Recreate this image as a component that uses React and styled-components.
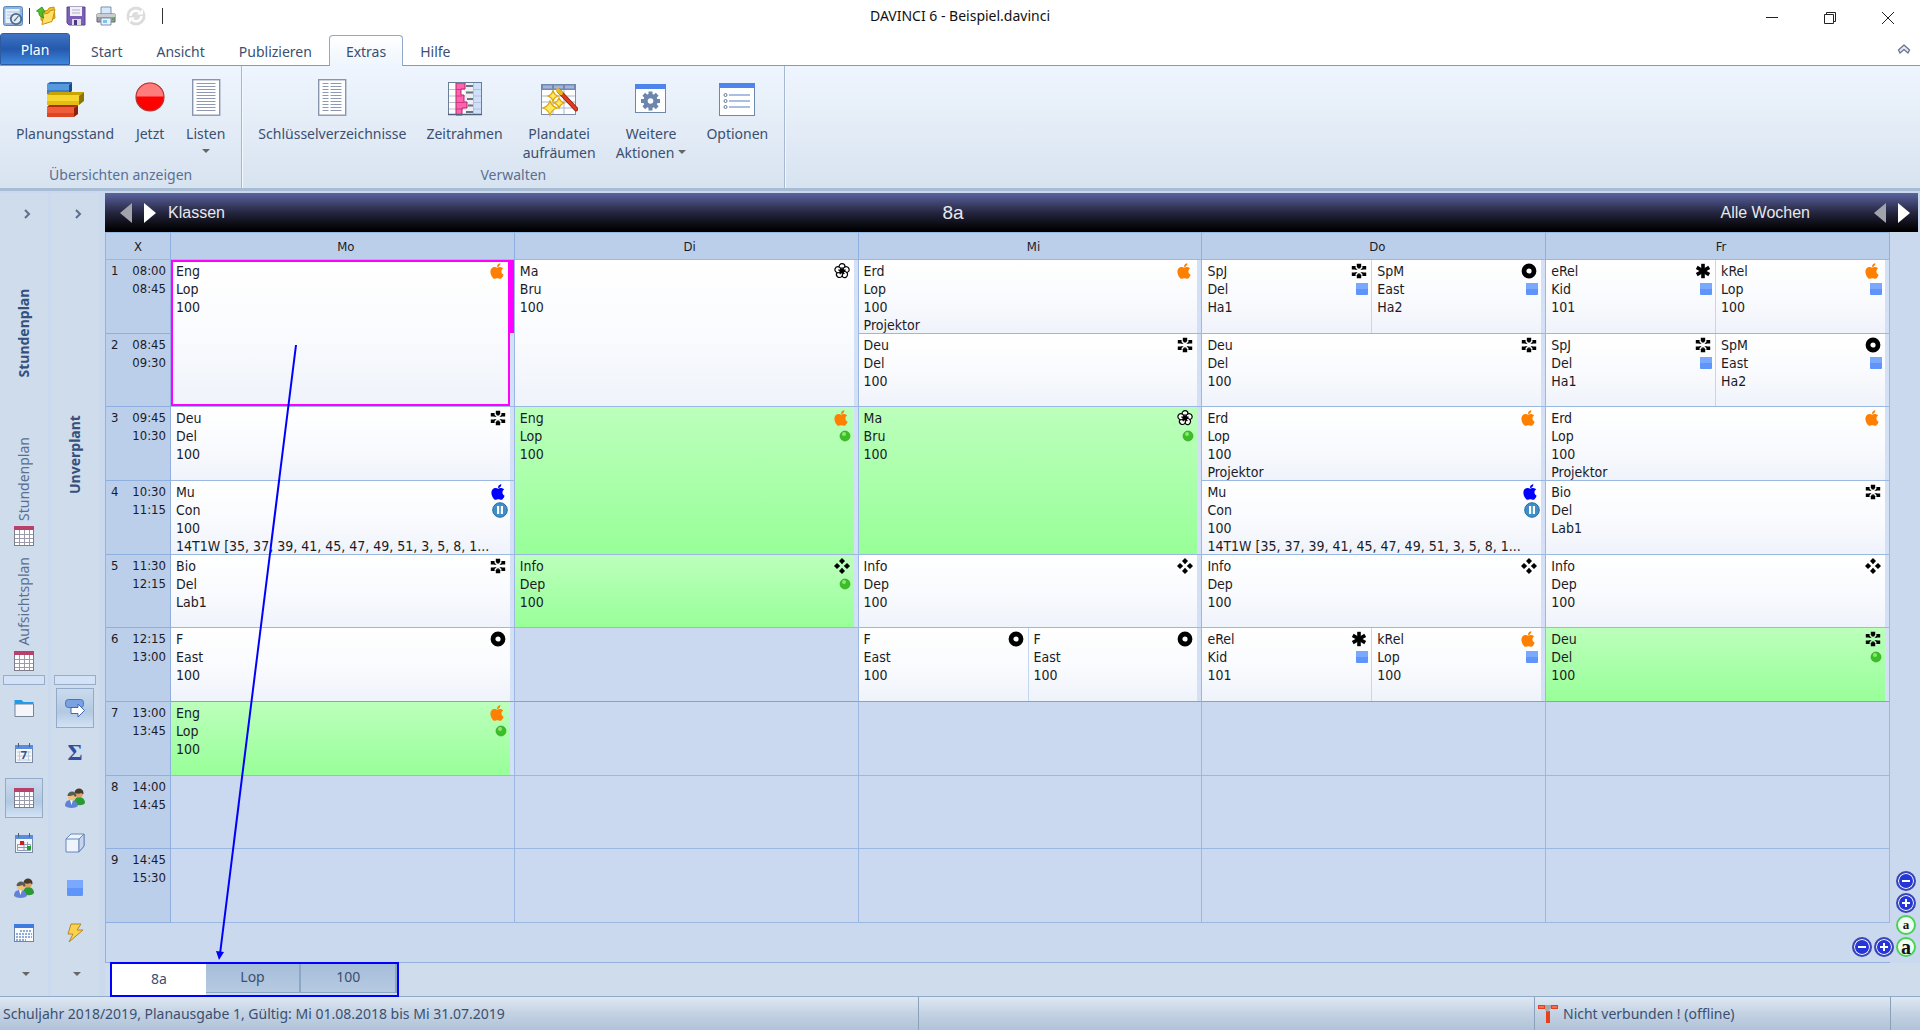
import React from 'react';
import styled, { createGlobalStyle, css } from 'styled-components';
import { FaApple } from 'react-icons/fa';

const GlobalStyle = createGlobalStyle`
  * {
    box-sizing: border-box;
  }

  body {
    margin: 0;
    font-family: 'Noto Sans', 'Open Sans', sans-serif;
    font-size: 14px;
    color: #3b4f70;
    background: #fff;
  }

  button {
    font: inherit;
    color: inherit;
    padding: 0;
    border: 0;
    background: none;
  }

  svg {
    display: block;
    flex: none;
  }
`;

const tahoma = css`
  font-family: 'DejaVu Sans Condensed', 'DejaVu Sans', sans-serif;
  font-size: 13px;
  line-height: 18px;
  color: #1b1b26;
`;

/* ---------- icons ---------- */

const Icon = ({ size = 20, box = 20, children }) => (
  <svg width={size} height={size} viewBox={`0 0 ${box} ${box}`} aria-hidden="true">
    {children}
  </svg>
);

const AppIcon = () => (
  <Icon>
    <rect x="0.5" y="0.5" width="19" height="19" rx="2" fill="#8fb4e0" stroke="#5b87bd" />
    <rect x="2.5" y="3" width="14" height="14" fill="#e9f1fa" />
    <path d="M4 6h12M4 9h5M4 12h4" stroke="#a9c3e2" />
    <circle cx="13" cy="13" r="5.2" fill="#e4ecf4" stroke="#51698a" strokeWidth="1.8" />
    <path d="M13 13l2.4-3M13 13l-2 2" stroke="#51698a" strokeWidth="1.2" />
  </Icon>
);

const OpenIcon = () => (
  <Icon>
    <path d="M5 6l7-2 1-2 5-1 1 11-9 5-5-3z" fill="#f0c22a" stroke="#c8930c" />
    <path d="M6 18.500L7.500 8l5-1 1-2 5.500-1.500-3 12z" fill="#ffe06a" stroke="#c8930c" />
    <path d="M0.500 5L6 1l3 5-2.500.5C6 9 7 11 8 12 4 11 2.500 9 3 6z" fill="#4fc02a" stroke="#2a8a12" strokeWidth="0.800" />
  </Icon>
);

const SaveIcon = () => (
  <Icon>
    <path d="M1 1h18v18H3l-2-2z" fill="#7a5fb5" stroke="#5d4496" />
    <path d="M4 1h12v9H4z" fill="#f2f2f6" />
    <path d="M6 4h8M6 7h8" stroke="#b3aeca" />
    <path d="M6 13h9v6H6z" fill="#dcdce6" />
    <path d="M8 14h3v5H8z" fill="#4b3880" />
  </Icon>
);

const PrintIcon = () => (
  <Icon>
    <path d="M5 1h10v8H5z" fill="#d6e8fb" stroke="#7f93ab" />
    <path d="M1 8h18v8H1z" fill="#9a9ea4" stroke="#62676e" />
    <path d="M1 8h18v3H1z" fill="#c9ccd0" />
    <path d="M5 12h10v7H5z" fill="#e9f4ff" stroke="#7f93ab" />
    <path d="M7 14h4v3H7z" fill="#7fc0f0" />
    <path d="M16 12h2v2h-2z" fill="#45b53a" />
  </Icon>
);

const RefreshIcon = () => (
  <Icon>
    <circle cx="10" cy="10" r="9.5" fill="#dcdcdc" />
    <path d="M4.500 10a5.500 5.500 0 019-4" fill="none" stroke="#fff" strokeWidth="2.400" />
    <path d="M15.500 10a5.500 5.500 0 01-9 4" fill="none" stroke="#fff" strokeWidth="2.400" />
    <path d="M11 8.500h6V3zM9 11.500H3V17z" fill="#fff" />
  </Icon>
);

const BricksIcon = () => (
  <Icon size={38} box={38}>
    <path d="M1 5l3-2h22l-3 3H1z" fill="#2f6ab0" />
    <path d="M23 6l3-3v9l-3 3z" fill="#1c4c88" />
    <path d="M1 5h22v10H1z" fill="#559ade" />
    <path d="M1 11h22v4H1z" fill="#3f7fc6" />
    <path d="M1 16l3-3h34l-5 4H1z" fill="#c9a400" />
    <path d="M33 17l5-4v9l-5 4z" fill="#8f7600" />
    <path d="M1 16h32v10H1z" fill="#f7d52c" />
    <path d="M1 22h32v4H1z" fill="#e3bd14" />
    <path d="M1 28l2-2h29l-4 3H1z" fill="#b02c0c" />
    <path d="M28 29l4-3v9l-4 3z" fill="#8c2008" />
    <path d="M1 28h27v10H1z" fill="#f05d38" />
    <path d="M1 34h27v4H1z" fill="#dc4622" />
  </Icon>
);

const NowIcon = () => (
  <svg width="32" height="38" viewBox="3 0 32 38" aria-hidden="true">
    <circle cx="19" cy="18" r="14" fill="#fe0000" />
    <path d="M5 17.500a14 14 0 0128 0z" fill="#ff7c7c" />
    <circle cx="19" cy="18" r="14" fill="none" stroke="#b03636" strokeWidth="1.200" />
  </svg>
);

const ListIcon = ({ columns }) => (
  <Icon size={38} box={38}>
    <rect x="5.700" y="0.700" width="27" height="35.500" fill="#fff" stroke="#8796ad" strokeWidth="1.400" />
    <path
      d="M9.500 4.500h19M9.500 7.500h19M9.500 10.500h19M9.500 13.500h19M9.500 16.500h19M9.500 19.500h19M9.500 22.500h19M9.500 25.500h19M9.500 28.500h19M9.500 31.500h19"
      stroke="#8f99b4"
    />
    {columns && <path d="M16.500 3v31" stroke="#fff" strokeWidth="2" />}
  </Icon>
);

const FrameIcon = () => (
  <Icon size={38} box={38}>
    <rect x="2.500" y="3.500" width="33" height="32" fill="#fff" />
    <path d="M27 4h8v32h-8z" fill="#cfe0fa" />
    <path d="M2.500 10.500h33M2.500 17h33M2.500 23.500h33M2.500 30h33M27.500 4v32" stroke="#b4c1d6" />
    <path d="M19 4h8v32h-8z" fill="#eceff4" />
    <path d="M20 7h7M20 13.500h7M21 20h6M22 26.500h5M20 33h7" stroke="#6b7280" strokeWidth="2" />
    <path d="M10 4h9v6h-4v6h3v7h3v6h-5v7h-6z" fill="#ff62ae" stroke="#b8256c" />
    <path d="M10 10.500h5M10 17h6M10 23.500h8M10 30h7" stroke="#c93a80" />
    <rect x="2.500" y="3.500" width="33" height="32" fill="none" stroke="#6b7c98" />
    <path d="M2 35.500h34" stroke="#4f607c" strokeWidth="1.500" />
  </Icon>
);

const sparkle = (x, y, r) =>
  `M${x} ${y - r}Q${x + r / 4} ${y - r / 4} ${x + r} ${y}Q${x + r / 4} ${y + r / 4} ${x} ${y + r}` +
  `Q${x - r / 4} ${y + r / 4} ${x - r} ${y}Q${x - r / 4} ${y - r / 4} ${x} ${y - r}z`;

const WandIcon = () => (
  <Icon size={38} box={38}>
    <rect x="1.500" y="5.500" width="34" height="30" fill="#fff" stroke="#7d8ea9" />
    <path d="M1 5h35v6H1z" fill="#7289b4" />
    <path d="M3 6.500h9v3H3zM14 6.500h9v3h-9zM25 6.500h9v3h-9z" fill="#a3b6d8" />
    <path d="M2 17h33M2 23h33M2 29h33M13 11v24M24 11v24" stroke="#a7b6cf" />
    {[[13, 17, 5], [19, 24, 5], [10, 29, 7]].map(([x, y, r]) => (
      <path key={y} d={sparkle(x, y, r)} fill="#ffe860" stroke="#dfa50a" strokeWidth="1.200" />
    ))}
    <path d="M19 12l17 18" stroke="#8f1a06" strokeWidth="4.500" strokeLinecap="round" />
    <path d="M19 12l17 18" stroke="#e23a1c" strokeWidth="3" strokeLinecap="round" />
    <path d="M18 11l3 3" stroke="#e8bb1a" strokeWidth="4" strokeLinecap="round" />
  </Icon>
);

const ActionsIcon = () => (
  <Icon size={38} box={38}>
    <rect x="3.500" y="5.500" width="30" height="28" fill="#fff" stroke="#6f87a8" />
    <path d="M3 5h31v5H3z" fill="#4f84ec" />
    <g transform="translate(18.500 22)">
      {[0, 45, 90, 135].map(angle => (
        <rect key={angle} x="-2" y="-9.500" width="4" height="19" fill="#6c86ae" transform={`rotate(${angle})`} />
      ))}
      <circle r="7.200" fill="#6c86ae" />
      <circle r="2.800" fill="#fff" />
    </g>
  </Icon>
);

const OptionsIcon = () => (
  <Icon size={38} box={38}>
    <rect x="1.500" y="4.500" width="35" height="32" fill="#fff" stroke="#6f87a8" />
    <path d="M1 4h36v5H1z" fill="#4f84ec" />
    <path d="M11 16h21M11 22h21M11 28h21" stroke="#8ea9d6" strokeWidth="1.500" />
    {[16, 22, 28].map(y => (
      <circle key={y} cx="7.500" cy={y} r="1.500" fill="#fff" stroke="#5f7695" />
    ))}
  </Icon>
);

const TableIcon = () => (
  <Icon>
    <rect x="0.5" y="0.5" width="19" height="19" fill="#fff" stroke="#7c7c8c" />
    <path d="M0 0h20v4H0z" fill="#b8416c" />
    <path d="M1 8.500h18M1 12.500h18M1 16.500h18M5.500 4v15M10.500 4v15M15.500 4v15" stroke="#9b9bab" />
  </Icon>
);

const FolderIcon = () => (
  <Icon>
    <path d="M0.500 2h7l2 2h10v3H0.500z" fill="#1f9be8" />
    <path d="M1 6h18.500v12.500H1z" fill="#f4f6fa" stroke="#76849a" />
  </Icon>
);

const DayIcon = () => (
  <Icon>
    <rect x="1.500" y="2.500" width="17" height="17" fill="#f3f6fb" stroke="#7b8aa3" />
    <path d="M1 2h18v4H1z" fill="#5b8bdd" />
    <path d="M4.500 0v4M15.500 0v4" stroke="#4d5a70" />
    <path d="M3 9h14M3 13h14M3 17h14M5.500 8v10M14.500 8v10" stroke="#c1cad8" />
    <text x="10" y="16" textAnchor="middle" fontSize="11" fontWeight="700" fill="#33518c">7</text>
  </Icon>
);

const WeekIcon = () => (
  <Icon>
    <rect x="1.500" y="2.500" width="17" height="17" fill="#f3f6fb" stroke="#7b8aa3" />
    <path d="M1 2h18v4H1z" fill="#5b8bdd" />
    <path d="M4.500 0v4M15.500 0v4" stroke="#4d5a70" />
    <path d="M3.500 11.500h13v6h-13zM3.500 14.500h13M10 9v9M13.500 9v9" fill="none" stroke="#8f9cb2" />
    <path d="M6 8h4v4H6z" fill="#d11a1a" />
    <path d="M13 13h4v4h-4z" fill="#1f9e2c" />
  </Icon>
);

const MonthIcon = () => (
  <Icon>
    <rect x="0.500" y="1.500" width="19" height="17" fill="#f8fafd" stroke="#7287a8" />
    <path d="M0 1h20v4H0z" fill="#3e7be0" />
    <path d="M6 8h12M2 11h16M2 14h16M2 17h10" stroke="#6e93cf" strokeWidth="1.500" strokeDasharray="2 1" />
  </Icon>
);

const PeopleIcon = () => (
  <Icon>
    <path d="M9 15c0-4 2-6 5-6s6 2 6 6c-2 3-8 3-11 0z" fill="#2b9a35" />
    <circle cx="14" cy="5.500" r="4" fill="#d9a566" />
    <path d="M9.500 5c0-6 9-6 9 0 0 2-1 1-2 0-2 1-4 1-7 0z" fill="#4b3a2c" />
    <path d="M0 18c0-4 2-6 6-6s6 2 7 6c-3 2.500-10 2.500-13 0z" fill="#5f83d8" />
    <path d="M5 12h3l-1.500 5z" fill="#fff" />
    <circle cx="7" cy="8.500" r="4" fill="#f0c07c" />
    <path d="M2.500 8c0-6 9-6 9 0-1 1-2 1-3-1-2 1-4 1-6 1z" fill="#5c5a58" />
  </Icon>
);

const MoveIcon = () => (
  <Icon>
    <rect x="0.500" y="1.500" width="18" height="8" rx="3" fill="#7aa1e0" stroke="#4a72b4" />
    <path d="M6 9.500h7V6l6.500 6.500L13 19v-3.500H6z" fill="#fff" stroke="#3d68b2" />
  </Icon>
);

const CubeIcon = () => (
  <Icon>
    <path d="M1 6l5-5h13v12l-5 6H1z" fill="#eef4fd" stroke="#6686b8" />
    <path d="M1 6h13v13M14 6l5-5" fill="none" stroke="#6686b8" />
    <path d="M14 6l5-5v12l-5 6z" fill="#c4d5f0" stroke="#6686b8" />
  </Icon>
);

const SquareIcon = ({ size = 12 }) => (
  <Icon size={size} box={12}>
    <rect width="12" height="12" rx="1" fill="#5f94fb" />
    <rect width="12" height="6" rx="1" fill="#7aa8fc" />
  </Icon>
);

const BoltIcon = () => (
  <Icon>
    <path d="M6 1h10l-4 6h6L4 19l4-8H3z" fill="#fbd24a" stroke="#b8862a" />
  </Icon>
);

const OfflineIcon = () => (
  <Icon>
    <path d="M0 1h7v4H0zM13 1h7v4h-7zM8 7h4v12H8z" fill="#e8401c" />
    <path d="M1 3h5M14 3h5" stroke="#ff9a80" />
    <path d="M7 1h6v3l-3 4-3-2z" fill="#a9a9a9" />
  </Icon>
);

const Apple = ({ color }) => <FaApple size={18} color={color} aria-hidden="true" />;

const spin = (count, render) =>
  Array.from({ length: count }, (_, i) => (
    <g key={i} transform={`rotate(${(360 / count) * i} 8 8)`}>
      {render}
    </g>
  ));

const Petals = () => (
  <Icon size={16} box={16}>
    {['', 'matrix(-1 0 0 1 16 0)', 'matrix(1 0 0 -1 0 16)', 'matrix(-1 0 0 -1 16 16)'].map(flip => (
      <g key={flip} transform={flip}>
        <path d="M5.800 0.800H8v3.400l-.4 1.600h-.5L5.800 3.800z" fill="#000" />
        <path d="M0.800 3h3.800v2l1.800 1.400v.4H4.400L3.600 6.400H0.800z" fill="#000" />
      </g>
    ))}
  </Icon>
);

const Flower = () => (
  <Icon size={16} box={16}>
    {spin(5, <circle cx="8" cy="3.700" r="3" fill="#fff" stroke="#000" strokeWidth="1.200" />)}
    {spin(5, <path d="M8 8V4.200" stroke="#000" strokeWidth="1.400" />)}
    <circle cx="8" cy="8" r="2.300" fill="#000" />
  </Icon>
);

const Ring = () => (
  <Icon size={16} box={16}>
    <circle cx="8" cy="8" r="5" fill="none" stroke="#000" strokeWidth="4.800" />
  </Icon>
);

const Star = () => (
  <Icon size={16} box={16}>
    {spin(6, <path d="M8 8V0.800" stroke="#000" strokeWidth="3.600" />)}
  </Icon>
);

const Diamonds = () => (
  <Icon size={16} box={16}>
    {spin(4, <path d="M8 0l3 3-3 3.200L5 3z" fill="#000" />)}
  </Icon>
);

const Dot = () => (
  <Icon size={12} box={12}>
    <circle cx="6" cy="6" r="5" fill="#3cbf26" stroke="#2f9a1e" strokeWidth="0.600" />
    <circle cx="5" cy="4" r="2" fill="#8be67a" />
  </Icon>
);

const Pause = () => (
  <Icon size={16} box={16}>
    <circle cx="8" cy="8" r="7.300" fill="#3f8ec6" stroke="#2a6ea8" />
    <path d="M5 4h2.200v8H5zM8.800 4H11v8H8.800z" fill="#fff" />
  </Icon>
);

const marks = {
  orange: <Apple color="#ff8000" />,
  blue: <Apple color="#0000ff" />,
  petals: <Petals />,
  flower: <Flower />,
  ring: <Ring />,
  star: <Star />,
  diamonds: <Diamonds />,
  dot: <Dot />,
  pause: <Pause />,
  square: <SquareIcon />
};

/* ---------- layout ---------- */

const Page = styled.div`
  position: relative;
  display: flex;
  flex-direction: column;
  height: 100vh;
`;

const TitleBar = styled.header`
  display: grid;
  grid-template-columns: 1fr auto 1fr;
  align-items: center;
  height: 31px;
  padding: 0 3px;
`;

const QuickAccess = styled.div`
  display: flex;
  align-items: center;
  gap: 10px;
`;

const Divider = styled.span`
  width: 1px;
  height: 16px;
  margin: 0 ${p => (p.$tight ? '-4px' : '6px')};
  background: #333;
`;

const Title = styled.h1`
  margin: 0;
  font-size: 14px;
  font-weight: 400;
  color: #111;
`;

const WindowButtons = styled.div`
  display: flex;
  justify-content: flex-end;

  button {
    display: flex;
    align-items: flex-end;
    justify-content: center;
    width: 58px;
    height: 31px;
    padding-bottom: 7px;
  }
`;

const TabBar = styled.nav`
  display: flex;
  align-items: flex-end;
  height: 35px;
  padding-right: 9px;
  border-bottom: 1px solid #7f9dbd;
`;

const PlanButton = styled.button`
  width: 70px;
  height: 32px;
  margin-right: 4px;
  border-radius: 3px 3px 0 0;
  color: #fff;
  background: linear-gradient(#3f74c4, #2459ad 50%, #3d86dc);
  border: 1px solid #2d5ca3;
`;

const Tab = styled.button`
  height: 31px;
  margin-bottom: -1px;
  padding: 0 16px;
  border: 1px solid ${p => (p.$active ? '#8fa9c8' : 'transparent')};
  border-bottom: 0;
  border-radius: 4px 4px 0 0;
  background: ${p => (p.$active ? 'linear-gradient(#fff, #eef5fd)' : 'none')};
`;

const Collapse = styled.button`
  margin: 0 0 9px auto;
`;

const Ribbon = styled.div`
  display: flex;
  height: 125px;
  border-bottom: 3px solid #a8bcd4;
  background: linear-gradient(#eef5fe, #e6eef8 40%, #d7e3f0);
`;

const Group = styled.section`
  display: flex;
  flex-direction: column;
  justify-content: space-between;
  padding: 13px 6px 3px;
  border-right: 1px solid #a5b8cf;
  box-shadow: 1px 0 #f3f8fe;
`;

const GroupRow = styled.div`
  display: flex;
`;

const GroupLabel = styled.h2`
  margin: 0;
  font-size: 14px;
  font-weight: 400;
  line-height: 20px;
  text-align: center;
  color: #5a6f93;
`;

const RibbonButton = styled.button`
  display: flex;
  flex-direction: column;
  align-items: center;
  padding: 0 10px;
  line-height: 19px;

  svg {
    margin-bottom: 7px;
  }
`;

const Caret = styled.span`
  display: inline-block;
  margin: ${p => (p.$inline ? '0 0 4px 4px' : '6px 0 0')};
  border: 4px solid transparent;
  border-top-color: #666;
  border-bottom: 0;
`;

const Body = styled.div`
  display: flex;
  flex: 1;
  min-height: 0;
  padding-top: 2px;
  background: #cbd9ee;
`;

const Sidebar = styled.aside`
  display: flex;
  flex-direction: column;
  align-items: center;
  width: 48px;
  margin-right: ${p => (p.$last ? '6px' : '3px')};
  background: #cfdcec;
`;

const Expand = styled.button`
  height: 42px;
  padding-left: 6px;
`;

const upright = css`
  writing-mode: vertical-rl;
  transform: rotate(180deg);
`;

const SideTitle = styled.h3`
  ${upright}
  flex: 1;
  margin: 0;
  font-size: 14px;
  line-height: 20px;
  text-align: center;
  color: #34507c;
`;

const SideTab = styled.button`
  display: flex;
  flex-direction: column;
  align-items: center;
  gap: 5px;
  padding: 7px 0 4px;
  color: #5a6f93;

  span {
    ${upright}
    line-height: 20px;
  }
`;

const Splitter = styled.div`
  width: 42px;
  height: 10px;
  margin-bottom: 3px;
  border: 1px solid #96aecb;
  background: #d3e2f6;
`;

const SideButton = styled.button`
  display: flex;
  align-items: center;
  justify-content: center;
  width: 38px;
  height: 40px;
  margin-bottom: 5px;
  border: 1px solid ${p => (p.$active ? '#93abc9' : 'transparent')};
  background: ${p => (p.$active ? 'linear-gradient(#cbdbed, #b2c9e2 60%, #d2e2f4)' : 'none')};
  color: #2f4f9f;
`;

const Sigma = styled.span`
  font: bold 23px 'Liberation Serif', serif;
`;

const More = styled.button`
  display: flex;
  align-items: center;
  justify-content: center;
  width: 38px;
  height: 36px;
  margin-bottom: 2px;
`;

const Main = styled.main`
  display: flex;
  flex: 1;
  flex-direction: column;
  min-width: 0;
`;

const PlanHeader = styled.div`
  display: grid;
  grid-template-columns: 1fr auto 1fr;
  align-items: center;
  height: 39px;
  margin-right: 2px;
  padding: 0 8px 0 15px;
  font: 16px 'Liberation Sans', sans-serif;
  color: #e8e8ec;
  background: linear-gradient(#5a63a0, #25263f 50%, #000 95%);
`;

const HeaderSide = styled.div`
  display: flex;
  align-items: center;
  justify-content: ${p => (p.$end ? 'flex-end' : 'flex-start')};
  gap: 12px;
`;

const HeaderName = styled.strong`
  margin-right: 124px;
  font-size: 19px;
  font-weight: 400;
`;

const HeaderText = styled.span`
  margin-right: ${p => (p.$gap ? '52px' : '0')};
`;

const PlanArea = styled.div`
  display: flex;
  flex: 1;
  min-height: 0;
`;

const PlanColumn = styled.div`
  display: flex;
  flex: 1;
  flex-direction: column;
  min-width: 0;
  border-left: 1px solid #93b2e0;
  border-bottom: 1px solid #93b2e0;
`;

const Timetable = styled.table`
  ${tahoma}
  display: grid;
  flex: 1;
  min-height: 0;
  grid-template-columns: 65px repeat(5, minmax(0, 1fr));
  grid-template-rows: 28px repeat(9, minmax(0, 1fr));

  thead,
  tbody,
  tr {
    display: contents;
  }
`;

const DayHead = styled.th`
  padding: 5px 0 0 ${p => (p.$day ? '7px' : '0')};
  border-right: 1px solid #8fafe0;
  border-bottom: 1px solid #9bb8e3;
  border-top: 1px solid #9bb8e3;
  font-weight: 400;
  background: #bccfea;
`;

const TimeHead = styled.th`
  display: flex;
  justify-content: space-between;
  grid-column: 1;
  grid-row: ${p => p.$row};
  padding: 2px 4px 0 5px;
  border-right: 1px solid #8fafe0;
  border-bottom: 1px solid #8fafe0;
  font-weight: 400;
  text-align: right;
  background: #bccfea;
`;

const Cell = styled.td`
  display: flex;
  grid-column: ${p => p.$col};
  grid-row: ${p => p.$row} / span ${p => p.$span};
  padding: 0 4px 0 0;
  border-right: 1px solid #9bb8e3;
  border-bottom: 1px solid ${p => (p.$lastLesson ? '#2fea3c' : '#9bb8e3')};
  background: ${p =>
    p.$selected
      ? 'linear-gradient(#ff00ff, #ff00ff) right top / 4px 50% no-repeat, #d3e0f5'
      : p.$filled
        ? '#d3e0f5'
        : '#cbd9f0'};
`;

const Lesson = styled.div`
  display: flex;
  flex: 1;
  justify-content: space-between;
  min-width: 0;
  padding: ${p => (p.$selected ? '0 1px 0 3px' : '2px 3px 0 5px')};
  border: ${p => (p.$selected ? '2px solid #ff00ff' : '0')};
  background: ${p =>
    p.$green ? 'linear-gradient(#bcffbc, #98ff98)' : 'linear-gradient(#fff, #fafbfe 50%, #eff3fa)'};

  & + & {
    border-left: 1px solid #c5d7f0;
  }
`;

const LessonText = styled.div`
  font-size: 14px;
  white-space: nowrap;
`;

const Marks = styled.div`
  display: flex;
  flex-direction: column;
  align-items: flex-end;

  span {
    display: flex;
    align-items: center;
    height: 18px;
  }

  span:first-child {
    padding-right: 1px;
  }
`;

const Zoom = styled.div`
  display: flex;
  flex-direction: column;
  justify-content: flex-end;
  gap: 2px;
  width: 30px;
  padding: 0 0 6px 6px;
`;

const ZoomRow = styled.div`
  display: flex;
  flex: none;
  justify-content: flex-end;
  align-items: flex-end;
  gap: 2px;
  height: 39px;
  margin-right: -4px;
  padding-bottom: 5px;
`;

const RoundButton = styled.button`
  display: flex;
  align-items: center;
  justify-content: center;
  width: 20px;
  height: 20px;
  border: 2px solid ${p => (p.$green ? '#49d15a' : '#3a45b8')};
  border-radius: 50%;
  color: ${p => (p.$green ? '#111' : '#fff')};
  background: ${p => (p.$green ? '#f0fff0' : '#2436d8')};
  box-shadow: ${p => (p.$green ? 'none' : 'inset 0 0 0 1px #fff')};
  font: ${p => (p.$large ? 'bold 20px' : 'bold 13px')} / 14px 'Liberation Serif', serif;
`;

const Footer = styled.div`
  height: 33px;
  padding-left: 5px;
  background: #cfdcec;
`;

const PlanTabs = styled.div`
  position: relative;
  display: flex;
  width: 289px;
  height: 35px;
  margin-top: -1px;
  border: 2px solid #0000ff;
  background: #cfdcec;
`;

const PlanTab = styled.button`
  flex: 1;
  height: ${p => (p.$active ? '31px' : '29px')};
  padding-bottom: 3px;
  border-right: ${p => (p.$active ? '0' : '2px solid #8da6c6')};
  border-bottom: ${p => (p.$active ? '0' : '1px solid #8da6c6')};
  background: ${p => (p.$active ? '#fff' : 'linear-gradient(#a6bdd9, #b6cae1)')};
`;

const StatusBar = styled.footer`
  display: grid;
  grid-template-columns: 919fr 616fr 356fr 29fr;
  height: 34px;
  border-top: 1px solid #8fa9c8;
  background: linear-gradient(#dfe8f3, #c3d2e3 50%, #b1c3d8);
`;

const StatusCell = styled.div`
  display: flex;
  align-items: center;
  gap: 5px;
  padding-left: 3px;
  border-right: 1px solid #8ba0ba;

  &:last-child {
    border-right: 0;
  }
`;

const Pointer = styled.svg`
  position: absolute;
  left: 210px;
  top: 340px;
  pointer-events: none;
`;

/* ---------- data ---------- */

const weekdays = ['Mo', 'Di', 'Mi', 'Do', 'Fr'];

const periods = [
  ['08:00', '08:45'],
  ['08:45', '09:30'],
  ['09:45', '10:30'],
  ['10:30', '11:15'],
  ['11:30', '12:15'],
  ['12:15', '13:00'],
  ['13:00', '13:45'],
  ['14:00', '14:45'],
  ['14:45', '15:30']
];

const weeks = '14T1W [35, 37, 39, 41, 45, 47, 49, 51, 3, 5, 8, 1...';

const eng = { lines: ['Eng', 'Lop', '100'], icons: ['orange'] };
const engGreen = { lines: ['Eng', 'Lop', '100'], icons: ['orange', 'dot'], green: true };
const erd = { lines: ['Erd', 'Lop', '100', 'Projektor'], icons: ['orange'] };
const deu = { lines: ['Deu', 'Del', '100'], icons: ['petals'] };
const bio = { lines: ['Bio', 'Del', 'Lab1'], icons: ['petals'] };
const info = { lines: ['Info', 'Dep', '100'], icons: ['diamonds'] };
const mu = { lines: ['Mu', 'Con', '100', weeks], icons: ['blue', 'pause'] };
const f = { lines: ['F', 'East', '100'], icons: ['ring'] };
const spj = { lines: ['SpJ', 'Del', 'Ha1'], icons: ['petals', 'square'] };
const spm = { lines: ['SpM', 'East', 'Ha2'], icons: ['ring', 'square'] };
const erel = { lines: ['eRel', 'Kid', '101'], icons: ['star', 'square'] };
const krel = { lines: ['kRel', 'Lop', '100'], icons: ['orange', 'square'] };
const ma = { lines: ['Ma', 'Bru', '100'], icons: ['flower'] };

// One entry per period; each lists [day, lessons, span].
const plan = [
  [[0, [eng], 2], [1, [ma], 2], [2, [erd]], [3, [spj, spm]], [4, [erel, krel]]],
  [[2, [deu]], [3, [deu]], [4, [spj, spm]]],
  [[0, [deu]], [1, [engGreen], 2], [2, [{ ...ma, icons: ['flower', 'dot'], green: true }], 2], [3, [erd]], [4, [erd]]],
  [[0, [mu]], [3, [mu]], [4, [bio]]],
  [[0, [bio]], [1, [{ ...info, icons: ['diamonds', 'dot'], green: true }]], [2, [info]], [3, [info]], [4, [info]]],
  [[0, [f]], [1, []], [2, [f, f]], [3, [erel, krel]], [4, [{ ...deu, icons: ['petals', 'dot'], green: true }]]],
  [[0, [engGreen]], [1, []], [2, []], [3, []], [4, []]],
  [[0, []], [1, []], [2, []], [3, []], [4, []]],
  [[0, []], [1, []], [2, []], [3, []], [4, []]]
];

const leftTools = [
  ['Ordner', <FolderIcon />],
  ['Tag', <DayIcon />],
  ['Stundenplan', <TableIcon />, true],
  ['Woche', <WeekIcon />],
  ['Personen', <PeopleIcon />],
  ['Kalender', <MonthIcon />]
];

const rightTools = [
  ['Verschieben', <MoveIcon />, true],
  ['Summe', <Sigma>Σ</Sigma>],
  ['Personen', <PeopleIcon />],
  ['Räume', <CubeIcon />],
  ['Kopplungen', <SquareIcon size={16} />],
  ['Konflikte', <BoltIcon />]
];

/* ---------- parts ---------- */

const Chevron = () => (
  <Icon size={10} box={10}>
    <path d="M3 1l4 4-4 4" fill="none" stroke="#5c6f8c" strokeWidth="2" />
  </Icon>
);

const Arrow = ({ left }) => (
  <svg width="12" height="20" viewBox="0 0 12 20" aria-hidden="true">
    <path d={left ? 'M12 0v20L0 10z' : 'M0 0v20l12-10z'} fill={left ? '#a3a3ad' : '#fff'} />
  </svg>
);

const Arrows = () => (
  <>
    <button aria-label="Zurück">
      <Arrow left />
    </button>
    <button aria-label="Weiter">
      <Arrow />
    </button>
  </>
);

const Tools = ({ items }) => (
  <>
    <Splitter />
    {items.map(([label, icon, active]) => (
      <SideButton key={label} aria-label={label} $active={active}>
        {icon}
      </SideButton>
    ))}
    <More aria-label="Mehr">
      <Caret $inline />
    </More>
  </>
);

const Sign = ({ plus }) => (
  <Icon size={12} box={12}>
    <path d={plus ? 'M2 6h8M6 2v8' : 'M2 6h8'} stroke="#fff" strokeWidth="2" />
  </Icon>
);

const ZoomButtons = () => (
  <>
    <RoundButton aria-label="Verkleinern">
      <Sign />
    </RoundButton>
    <RoundButton aria-label="Vergrößern">
      <Sign plus />
    </RoundButton>
  </>
);

const Schedule = () => (
  <Timetable>
    <thead>
      <tr>
        <DayHead scope="col">X</DayHead>
        {weekdays.map(day => (
          <DayHead key={day} scope="col" $day>
            {day}
          </DayHead>
        ))}
      </tr>
    </thead>
    <tbody>
      {plan.map((cells, row) => (
        <tr key={row}>
          <TimeHead scope="row" $row={row + 2}>
            <span>{row + 1}</span>
            <span>
              {periods[row][0]}
              <br />
              {periods[row][1]}
            </span>
          </TimeHead>
          {cells.map(([day, lessons, span = 1]) => {
            const selected = row === 0 && day === 0;
            return (
              <Cell
                key={day}
                rowSpan={span}
                $col={day + 2}
                $row={row + 2}
                $span={span}
                $lastLesson={row === 5}
                $filled={lessons.length > 0}
                $selected={selected}
              >
                {lessons.map((lesson, i) => (
                  <Lesson key={i} $green={lesson.green} $selected={selected}>
                    <LessonText>
                      {lesson.lines.map(line => (
                        <div key={line}>{line}</div>
                      ))}
                    </LessonText>
                    <Marks>
                      {lesson.icons.map(icon => (
                        <span key={icon}>{marks[icon]}</span>
                      ))}
                    </Marks>
                  </Lesson>
                ))}
              </Cell>
            );
          })}
        </tr>
      ))}
    </tbody>
  </Timetable>
);

const App = () => (
  <Page>
    <GlobalStyle />
    <TitleBar>
      <QuickAccess>
        <AppIcon />
        <Divider $tight />
        <OpenIcon />
        <SaveIcon />
        <PrintIcon />
        <RefreshIcon />
        <Divider />
      </QuickAccess>
      <Title>DAVINCI 6 - Beispiel.davinci</Title>
      <WindowButtons>
        <button aria-label="Minimieren">
          <Icon size={12} box={12}>
            <path d="M0 5.500h12" stroke="#222" />
          </Icon>
        </button>
        <button aria-label="Wiederherstellen">
          <Icon size={12} box={12}>
            <path d="M0.500 2.500h9v9h-9zM2.500 2.500v-2h9v9h-2" fill="none" stroke="#222" />
          </Icon>
        </button>
        <button aria-label="Schließen">
          <Icon size={12} box={12}>
            <path d="M0 0l12 12M12 0L0 12" stroke="#222" />
          </Icon>
        </button>
      </WindowButtons>
    </TitleBar>
    <TabBar>
      <PlanButton>Plan</PlanButton>
      <Tab>Start</Tab>
      <Tab>Ansicht</Tab>
      <Tab>Publizieren</Tab>
      <Tab $active>Extras</Tab>
      <Tab>Hilfe</Tab>
      <Collapse aria-label="Menüband minimieren">
        <Icon size={14} box={14}>
          <path
            d="M7 3l5.500 5-1.500 3-4-3.500L3 11 1.500 8z"
            fill="#e6ecf5"
            stroke="#66758c"
            strokeWidth="1.300"
            strokeLinejoin="round"
          />
        </Icon>
      </Collapse>
    </TabBar>
    <Ribbon>
      <Group>
        <GroupRow>
          <RibbonButton>
            <BricksIcon />
            Planungsstand
          </RibbonButton>
          <RibbonButton>
            <NowIcon />
            Jetzt
          </RibbonButton>
          <RibbonButton>
            <ListIcon />
            Listen
            <Caret />
          </RibbonButton>
        </GroupRow>
        <GroupLabel>Übersichten anzeigen</GroupLabel>
      </Group>
      <Group>
        <GroupRow>
          <RibbonButton>
            <ListIcon columns />
            Schlüsselverzeichnisse
          </RibbonButton>
          <RibbonButton>
            <FrameIcon />
            Zeitrahmen
          </RibbonButton>
          <RibbonButton>
            <WandIcon />
            Plandatei
            <br />
            aufräumen
          </RibbonButton>
          <RibbonButton>
            <ActionsIcon />
            Weitere
            <span>
              Aktionen
              <Caret $inline />
            </span>
          </RibbonButton>
          <RibbonButton>
            <OptionsIcon />
            Optionen
          </RibbonButton>
        </GroupRow>
        <GroupLabel>Verwalten</GroupLabel>
      </Group>
    </Ribbon>
    <Body>
      <Sidebar>
        <Expand aria-label="Stundenplan aufklappen">
          <Chevron />
        </Expand>
        <SideTitle>Stundenplan</SideTitle>
        <SideTab>
          <span>Stundenplan</span>
          <TableIcon />
        </SideTab>
        <SideTab>
          <span>Aufsichtsplan</span>
          <TableIcon />
        </SideTab>
        <Tools items={leftTools} />
      </Sidebar>
      <Sidebar $last>
        <Expand aria-label="Unverplant aufklappen">
          <Chevron />
        </Expand>
        <SideTitle>Unverplant</SideTitle>
        <Tools items={rightTools} />
      </Sidebar>
      <Main>
        <PlanHeader>
          <HeaderSide>
            <Arrows />
            <HeaderText>Klassen</HeaderText>
          </HeaderSide>
          <HeaderName>8a</HeaderName>
          <HeaderSide $end>
            <HeaderText $gap>Alle Wochen</HeaderText>
            <Arrows />
          </HeaderSide>
        </PlanHeader>
        <PlanArea>
          <PlanColumn>
            <Schedule />
            <ZoomRow>
              <ZoomButtons />
            </ZoomRow>
          </PlanColumn>
          <Zoom>
            <ZoomButtons />
            <RoundButton $green aria-label="Kleine Schrift">
              a
            </RoundButton>
            <RoundButton $green $large aria-label="Große Schrift">
              a
            </RoundButton>
          </Zoom>
        </PlanArea>
        <Footer>
          <PlanTabs>
            <PlanTab $active>8a</PlanTab>
            <PlanTab>Lop</PlanTab>
            <PlanTab>100</PlanTab>
          </PlanTabs>
        </Footer>
      </Main>
    </Body>
    <StatusBar>
      <StatusCell>Schuljahr 2018/2019, Planausgabe 1, Gültig: Mi 01.08.2018 bis Mi 31.07.2019</StatusCell>
      <StatusCell />
      <StatusCell>
        <OfflineIcon />
        Nicht verbunden ! (offline)
      </StatusCell>
      <StatusCell />
    </StatusBar>
    <Pointer width="100" height="624" viewBox="0 0 100 624" aria-hidden="true">
      <path d="M86 5L10 614" stroke="#0000ff" strokeWidth="2" />
      <path d="M6 611l8 1-5 8z" fill="#0000ff" />
    </Pointer>
  </Page>
);

export default App;
